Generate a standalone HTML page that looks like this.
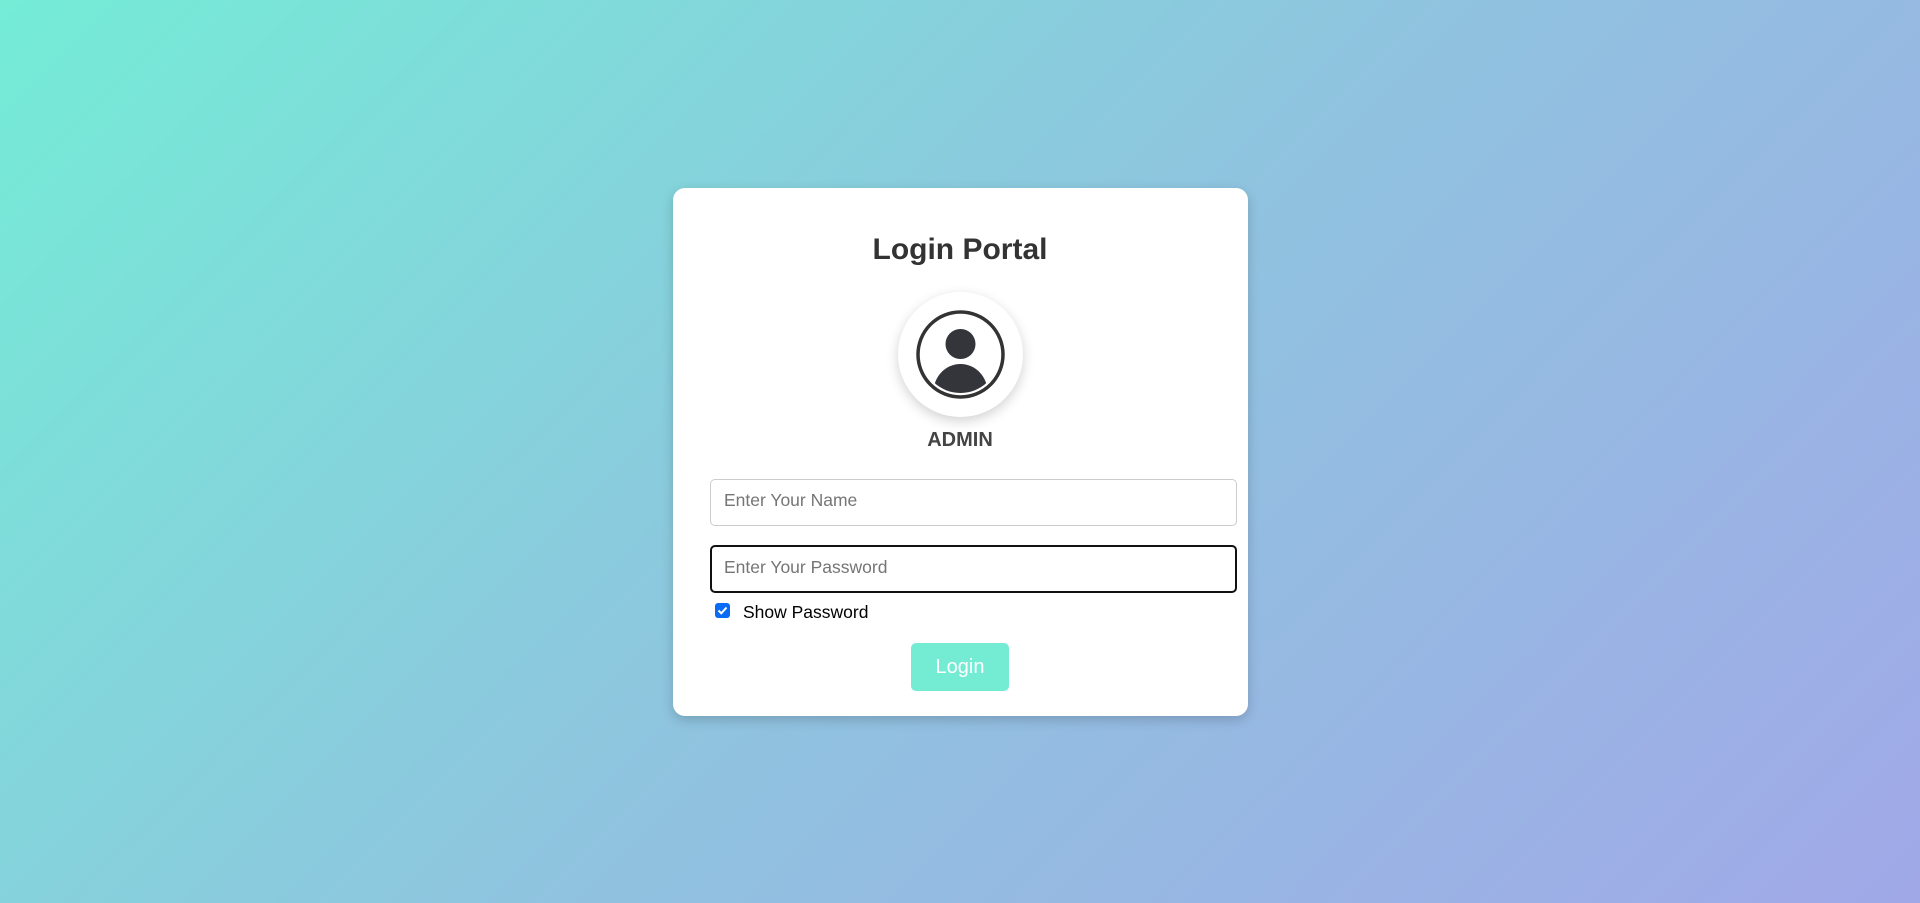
<!DOCTYPE html>
<html><head><meta charset="utf-8"><style>
html,body{margin:0;padding:0;width:1920px;height:903px;overflow:hidden}
body{background:linear-gradient(135deg,#74ecd6 0%,#8fc4df 50%,#a1a8e8 100%);font-family:"Liberation Sans",Arial,sans-serif;position:relative}
.card{position:absolute;left:673px;top:188px;width:575px;height:528px;background:#fff;border-radius:12px;box-shadow:0 4px 12px rgba(0,0,0,.18)}
h1{position:absolute;left:0;right:0;top:233px;margin:0;text-align:center;font-size:30px;font-weight:bold;color:#333}
.av{position:absolute;left:898px;top:292px;width:125px;height:125px;border-radius:50%;background:#fff;box-shadow:0 4px 12px rgba(0,0,0,.18)}
.admin{position:absolute;left:0;right:0;top:429px;text-align:center;font-size:20px;font-weight:bold;color:#444}
.in{position:absolute;left:710px;width:527px;box-sizing:border-box;border-radius:5px;background:#fff;font-size:17.5px;color:#757575;padding-left:13px;line-height:1}
.n{top:479px;height:47px;border:1px solid #ccc;padding-top:12px}
.p{top:545px;height:48px;border:2px solid #111;padding-top:12px;padding-left:12px}
.cb{position:absolute;left:715px;top:603px;width:15px;height:15px;background:#0a6cf5;border-radius:3px}
.lbl{position:absolute;left:743px;top:602px;font-size:17.5px;color:#000}
.btn{position:absolute;left:911px;top:643px;width:98px;height:48px;background:#74ecd4;border-radius:5px;color:#fff;font-size:20px;text-align:center;line-height:48px}
</style></head><body>
<div class="card"></div>
<h1>Login Portal</h1>
<div class="av"><svg width="125" height="125" viewBox="0 0 125 125">
<defs><clipPath id="c"><circle cx="62.5" cy="62.5" r="38.5"/></clipPath></defs>
<circle cx="62.5" cy="62.5" r="42.5" fill="none" stroke="#333" stroke-width="3.5"/>
<circle cx="62.5" cy="52" r="15" fill="#33353a"/>
<ellipse cx="62.5" cy="100" rx="27" ry="28" fill="#33353a" clip-path="url(#c)"/>
</svg></div>
<div class="admin">ADMIN</div>
<div class="in n">Enter Your Name</div>
<div class="in p">Enter Your Password</div>
<div class="cb"><svg width="15" height="15" viewBox="0 0 15 15"><path d="M3.5 7.5 L6.3 10.3 L11.5 4.5" fill="none" stroke="#fff" stroke-width="2"/></svg></div>
<div class="lbl">Show Password</div>
<div class="btn">Login</div>
</body></html>
